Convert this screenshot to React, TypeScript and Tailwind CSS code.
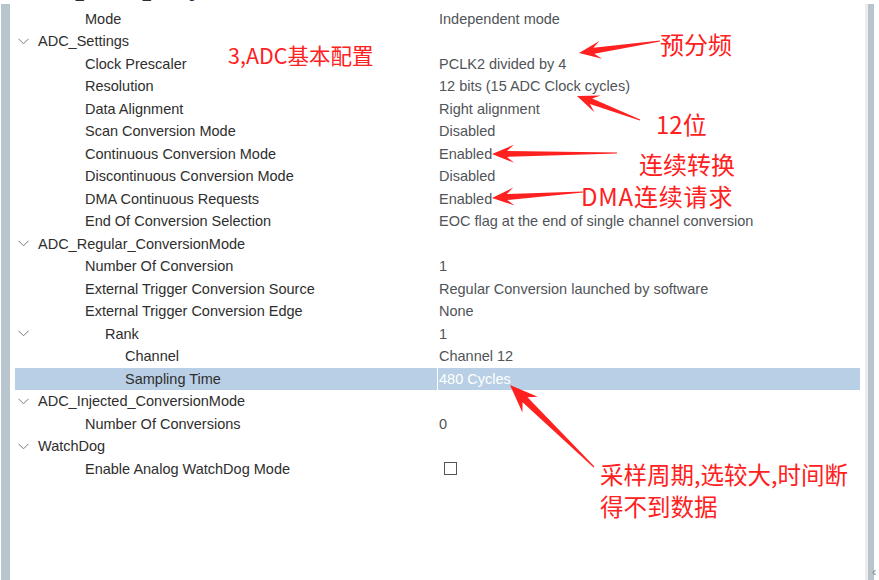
import React from 'react';

type Row = {
  label: string;
  value?: string;
  level: number;
  chevron?: boolean;
  selected?: boolean;
  checkbox?: boolean;
  clipped?: boolean;
};

const rows: Row[] = [
  { label: 'ADCs_Common_Settings', level: 0, chevron: true, clipped: true },
  { label: 'Mode', value: 'Independent mode', level: 1 },
  { label: 'ADC_Settings', level: 0, chevron: true },
  { label: 'Clock Prescaler', value: 'PCLK2 divided by 4', level: 1 },
  { label: 'Resolution', value: '12 bits (15 ADC Clock cycles)', level: 1 },
  { label: 'Data Alignment', value: 'Right alignment', level: 1 },
  { label: 'Scan Conversion Mode', value: 'Disabled', level: 1 },
  { label: 'Continuous Conversion Mode', value: 'Enabled', level: 1 },
  { label: 'Discontinuous Conversion Mode', value: 'Disabled', level: 1 },
  { label: 'DMA Continuous Requests', value: 'Enabled', level: 1 },
  { label: 'End Of Conversion Selection', value: 'EOC flag at the end of single channel conversion', level: 1 },
  { label: 'ADC_Regular_ConversionMode', level: 0, chevron: true },
  { label: 'Number Of Conversion', value: '1', level: 1 },
  { label: 'External Trigger Conversion Source', value: 'Regular Conversion launched by software', level: 1 },
  { label: 'External Trigger Conversion Edge', value: 'None', level: 1 },
  { label: 'Rank', value: '1', level: 2, chevron: true },
  { label: 'Channel', value: 'Channel 12', level: 3 },
  { label: 'Sampling Time', value: '480 Cycles', level: 3, selected: true },
  { label: 'ADC_Injected_ConversionMode', level: 0, chevron: true },
  { label: 'Number Of Conversions', value: '0', level: 1 },
  { label: 'WatchDog', level: 0, chevron: true },
  { label: 'Enable Analog WatchDog Mode', level: 1, checkbox: true },
];

const indent = ['ml-0', 'ml-[47px]', 'ml-[67px]', 'ml-[87px]'];

function Chevron() {
  return (
    <svg width="11" height="7" viewBox="0 0 11 7" className="block">
      <polyline points="0.5,0.8 5.5,5.8 10.5,0.8" fill="none" stroke="#7a7a7a" strokeWidth="1" />
    </svg>
  );
}

// 红色标注箭头：尾部细，头部带倒钩
function arrowPoints(tx: number, ty: number, hx: number, hy: number, head = 22, barb = 9, neck = 3) {
  const dx = hx - tx;
  const dy = hy - ty;
  const len = Math.hypot(dx, dy);
  const ux = dx / len;
  const uy = dy / len;
  const nx = -uy;
  const ny = ux;
  const at = (d: number, w: number) => `${(tx + ux * d + nx * w).toFixed(1)},${(ty + uy * d + ny * w).toFixed(1)}`;
  return [
    at(0, 0.6),
    at(len - head + 7, neck),
    at(len - head, barb),
    at(len, 0),
    at(len - head, -barb),
    at(len - head + 7, -neck),
    at(0, -0.6),
  ].join(' ');
}

function TreeRow({ row }: { row: Row }) {
  return (
    <div className={`flex h-[22.5px] items-center ${row.selected ? 'bg-[#b9cfe5]' : ''}`}>
      <div className={`flex w-[422px] items-center ${row.clipped ? '-translate-y-[3px]' : ''}`}>
        <div className="flex w-[23px] justify-start pl-[3px]">{row.chevron && <Chevron />}</div>
        <span className={`${indent[row.level]} whitespace-nowrap text-[#2e2e2e]`}>{row.label}</span>
      </div>
      <div className={`h-full w-px ${row.selected ? 'bg-white' : ''}`} />
      <div className="flex flex-1 items-center pl-px">
        {row.checkbox ? (
          <div className="ml-[5px] h-[13px] w-[13px] border border-[#555] bg-white" />
        ) : (
          <span className={`whitespace-nowrap ${row.selected ? 'text-white' : 'text-[#505458]'}`}>{row.value}</span>
        )}
      </div>
    </div>
  );
}

export default function App() {
  const red = '#ff2020';
  return (
    <div className="relative flex h-[580px] w-[879px] overflow-hidden bg-white font-['Liberation_Sans','Noto_Sans',sans-serif] text-[14.5px] leading-none">
      <div className="ml-px mt-[4px] w-[9px] bg-[#b9c5cd]" />

      <div className="w-[855px] overflow-hidden pl-[5px]">
        <div className="-mt-[15px] w-[845px]">
          {rows.map((r, i) => (
            <TreeRow key={i} row={r} />
          ))}
        </div>
      </div>

      <div className="mt-[4px] w-[3px] bg-[#ededed]" />
      <div className="mt-[4px] w-[6px] bg-[#b9c5cd]" />
      <div className="w-[5px]" />

      {/* 标注 */}
      <svg className="pointer-events-none absolute inset-0" width="879" height="580">
        <polygon fill={red} points={arrowPoints(660, 41, 579, 53)} />
        <polygon fill={red} points={arrowPoints(640, 120, 577, 96)} />
        <polygon fill={red} points={arrowPoints(617, 153, 492, 154)} />
        <polygon fill={red} points={arrowPoints(583, 192, 492, 198)} />
        <polygon fill={red} points={arrowPoints(594, 467, 510, 385, 28, 11, 3.5)} />
      </svg>

      <div className="pointer-events-none absolute inset-0 font-['Noto_Sans_CJK_SC','Liberation_Sans',sans-serif] text-[#ff2020]">
        <span className="absolute left-[228px] top-[42px] whitespace-nowrap text-[21.5px] leading-[26px]">3,ADC基本配置</span>
        <span className="absolute left-[660px] top-[29px] whitespace-nowrap text-[24px] leading-[30px]">预分频</span>
        <span className="absolute left-[656px] top-[109px] whitespace-nowrap text-[24px] leading-[30px]">12位</span>
        <span className="absolute left-[639px] top-[149px] whitespace-nowrap text-[24px] leading-[30px]">连续转换</span>
        <span className="absolute left-[581px] top-[181px] whitespace-nowrap text-[24px] leading-[30px] tracking-[0.8px]">DMA连续请求</span>
        <span className="absolute left-[600px] top-[458px] whitespace-nowrap text-[23.5px] leading-[32px]">
          采样周期,选较大,时间断
          <br />
          得不到数据
        </span>
      </div>

      <span className="absolute left-[872px] top-[565px] text-[13px] leading-none text-[#888]">‹</span>
    </div>
  );
}
